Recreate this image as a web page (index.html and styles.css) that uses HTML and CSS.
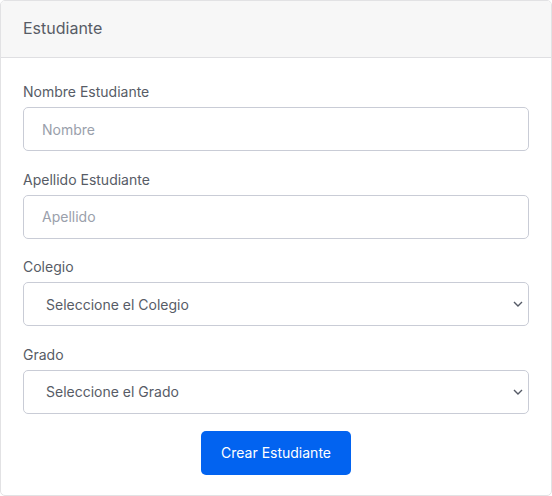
FILE: index.html
```html
<!DOCTYPE html>
<html lang="es">
<head>
  <meta charset="UTF-8" />
  <title>Estudiante</title>
  <link rel="stylesheet" href="styles.css">
</head>
<body>
  <div class="card">
    <div class="card-header">Estudiante</div>
    <form class="card-body">
      <div class="field">
        <label for="nombre">Nombre Estudiante</label>
        <input id="nombre" type="text" placeholder="Nombre" />
      </div>
      <div class="field">
        <label for="apellido">Apellido Estudiante</label>
        <input id="apellido" type="text" placeholder="Apellido" />
      </div>
      <div class="field">
        <label for="colegio">Colegio</label>
        <div class="select-wrap">
          <select id="colegio"><option>Seleccione el Colegio</option></select>
          <svg class="caret" viewBox="0 0 10 6" width="10" height="6"><path d="M1 1l4 4 4-4" fill="none" stroke="#555a66" stroke-width="1.4"/></svg>
        </div>
      </div>
      <div class="field">
        <label for="grado">Grado</label>
        <div class="select-wrap">
          <select id="grado"><option>Seleccione el Grado</option></select>
          <svg class="caret" viewBox="0 0 10 6" width="10" height="6"><path d="M1 1l4 4 4-4" fill="none" stroke="#555a66" stroke-width="1.4"/></svg>
        </div>
      </div>
      <div class="actions">
        <button type="button" class="btn">Crear Estudiante</button>
      </div>
    </form>
  </div>
</body>
</html>
```

FILE: styles.css
```css
body { margin: 0; font-family: Inter, "Noto Sans", sans-serif; color: #545b66; }
.card { width: 550px; height: 494px; border: 1px solid #e2e2e4; border-radius: 5px; box-sizing: content-box; overflow: hidden; }
.card-header { height: 56px; line-height: 55px; padding: 0 22px; background: #f7f7f7; border-bottom: 1px solid #dfdfe2; font-size: 16px; color: #575c66; }
.card-body { padding: 24px 22px 0; display: flex; flex-direction: column; }
.field { display: flex; flex-direction: column; margin-bottom: 18.5px; }
.field label { font-size: 14px; line-height: 20px; margin-bottom: 5px; color: #575c66; }
.field input, .field select { width: 100%; box-sizing: border-box; height: 44px; border: 1px solid #c9ccd6; border-radius: 5px; font-family: inherit; font-size: 14px; color: #575c66; background: #fff; outline: none; }
.field input { padding: 0 18px; }
.field input::placeholder { color: #9aa0ab; }
.field select { padding: 0 22px; appearance: none; -webkit-appearance: none; }
.select-wrap { position: relative; }
.caret { position: absolute; right: 6px; top: 19px; }
.actions { display: flex; justify-content: center; margin-top: -1.5px; }
.btn { width: 150px; height: 44px; border: 0; border-radius: 5px; background: #0263f0; color: #fff; font-family: inherit; font-size: 14px; }
```
